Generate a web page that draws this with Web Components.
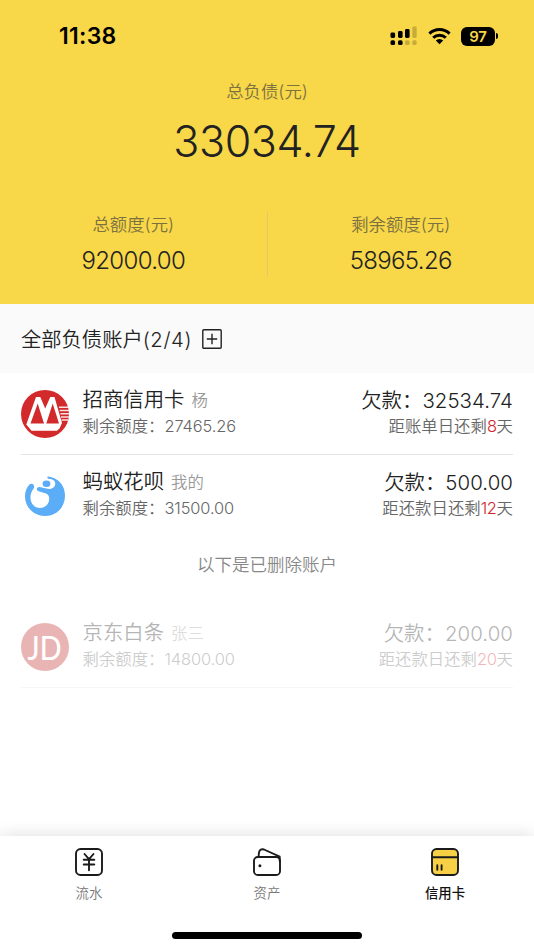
<!DOCTYPE html>
<html lang="zh-CN">
<head>
<meta charset="utf-8">
<title>信用卡</title>
<style>
html,body{margin:0;padding:0}
body{width:534px;height:950px;overflow:hidden;background:#fff;font-family:Inter,"Noto Sans CJK SC",sans-serif;font-weight:350;color:#222}
</style>
</head>
<body>
<credit-app></credit-app>
<script>
function define(name, html) {
  const t = document.createElement('template');
  t.innerHTML = html;
  customElements.define(name, class extends HTMLElement {
    constructor() {
      super();
      this.attachShadow({mode: 'open'}).appendChild(t.content.cloneNode(true));
    }
  });
}

define('status-bar', `
<style>
:host{display:flex;height:71px;box-sizing:border-box;padding:1px 36px 0 59px;align-items:center;justify-content:space-between;color:#000}
.time{font-size:23px;font-weight:600;line-height:28px;letter-spacing:.3px}
.right{display:flex;align-items:center}
svg{display:block}
.sig{margin-right:10px}.wifi{margin-right:10px}
.bat{width:34px;height:19px;border-radius:6px;background:#000;color:#f7d748;font-size:15px;font-weight:600;line-height:19px;text-align:center;letter-spacing:-.3px}
.cap{width:2px;height:6px;margin-left:1px;border-radius:0 3px 3px 0;background:#000}
</style>
<span class="time">11:38</span>
<div class="right">
<svg class="sig" width="28" height="20" viewBox="0 0 28 20"><rect x=".5" y="6.500" width="4.600" height="5.500" rx="1.400"/><rect x="8" y="5" width="4.600" height="7" rx="1.400"/><rect x="15" y="3" width="4.600" height="9" rx="1.400"/><rect x="22.300" y=".5" width="4.400" height="11.500" rx="1.400" opacity=".2"/><rect x=".5" y="14.300" width="4.600" height="4.700" rx="1.600"/><rect x="8" y="14.300" width="4.600" height="4.700" rx="1.600"/><rect x="15" y="14.300" width="4.600" height="4.700" rx="1.600" opacity=".2"/><rect x="22.300" y="14.300" width="4.400" height="4.700" rx="1.600" opacity=".2"/></svg>
<svg class="wifi" width="23" height="18" viewBox="0 0 23 18" fill="none" stroke="#000" stroke-width="3"><path d="M1.400 6.600a14.500 14.500 0 0 1 20.200 0"/><path d="M5.200 10.700a9 9 0 0 1 12.600 0"/><path d="M11.500 17.300 7.800 13.600a5.300 5.300 0 0 1 7.400 0Z" fill="#000" stroke="none"/></svg>
<span class="bat">97</span><i class="cap"></i>
</div>`);

define('amount-stat', `
<style>
:host{display:flex;flex-direction:column;align-items:center;flex:1}
.l{font-size:17.400px;line-height:24px;color:#7c7141;white-space:nowrap}
.v{font-size:24px;line-height:30px;margin-top:9px;letter-spacing:-.65px;white-space:nowrap}
:host([large]) .v{font-size:43px;font-weight:300;line-height:52px;margin-top:11px;letter-spacing:-.4px}
</style>
<span class="l"><slot name="label"></slot></span><span class="v"><slot></slot></span>`);

define('debt-summary', `
<style>
:host{display:flex;flex-direction:column;height:304px;background:#f8d748}
.total{display:flex;margin-top:9px}
.pair{display:flex;margin-top:45px;height:65px}
.pair amount-stat{padding-top:1px}
hr{width:1px;height:65px;border:0;margin:0;background:#dfc96a}
</style>
<status-bar></status-bar>
<div class="total"><amount-stat large><span slot="label">总负债(元)</span>33034.74</amount-stat></div>
<div class="pair"><amount-stat><span slot="label">总额度(元)</span>92000.00</amount-stat><hr><amount-stat><span slot="label">剩余额度(元)</span>58965.26</amount-stat></div>`);

define('section-heading', `
<style>
:host{display:flex;align-items:center;gap:10px;height:69px;padding:0 21px;background:#fafafa;font-size:20.300px;white-space:nowrap}
span{padding-bottom:2px}
.count{letter-spacing:.6px}
svg{display:block}
</style>
<span><slot></slot><span class="count"><slot name="count"></slot></span></span>
<svg width="20" height="20" viewBox="0 0 20 20" fill="none" stroke="#222" stroke-width="1.400"><rect x=".8" y=".8" width="18.400" height="18.400" rx="1"/><path d="M10 4.800v10.400M4.800 10h10.400"/></svg>`);

define('account-row', `
<style>
:host{display:block;padding:0 21px}
.row{display:flex;height:82px;box-sizing:border-box;border-bottom:1px solid #e4e4e4;align-items:center}
:host([last]) .row{border-color:transparent}
:host([deleted]) .row{opacity:.33}
.icon{width:48px;height:48px;margin-right:13.500px}
.text{flex:1;min-width:0;padding-bottom:2px}
.line{display:flex;justify-content:space-between;white-space:nowrap}
.a{font-size:20.400px;line-height:27px;height:27px;align-items:center}
.b{font-size:16.400px;line-height:24px;height:24px;color:#666}
.own{font-size:16.400px;color:#999;margin-left:7px;position:relative;top:-1px}
.n{letter-spacing:.08px}
.m{letter-spacing:-.1px}
.day{color:#d2232a;letter-spacing:-.3px}
</style>
<div class="row"><div class="icon"><slot name="icon"></slot></div>
<div class="text"><div class="line a"><span><slot name="name"></slot><span class="own"><slot name="owner"></slot></span></span><span>欠款：<span class="n"><slot name="debt"></slot></span></span></div>
<div class="line b"><span>剩余额度：<span class="m"><slot name="left"></slot></span></span><span><slot name="due"></slot><span class="day"><slot name="days"></slot></span>天</span></div></div></div>`);

define('bank-logo', `
<style>:host,svg{display:block;width:48px;height:48px}</style>
<svg viewBox="0 0 48 48"><circle cx="24" cy="24" r="24" fill="#d2292a"/>
<path fill="#fff" d="M15 7h4.300L24.200 18.500 29.300 7h4.200L41 33l-2.500 5.500-2.500 2.200H10.500L5.300 34.500Z"/>
<path fill="#d2292a" d="M16.700 13.500 23 33.600H9.500ZM31.700 13.500 38 33.600H25.300Z"/>
<path d="M38 17.300h9.200M38.700 20.500h9.300M39.400 23.700h8.600M40 26.900h8M40.500 30.100h6.500" stroke="#fff" stroke-width="1.500" opacity=".85"/></svg>`);

define('pay-logo', `
<style>:host,svg{display:block;width:48px;height:48px}</style>
<svg viewBox="0 0 48 48"><path fill="#5aadf6" d="M27 4.600C37 5.500 44 13.200 44 23.500 44 35.500 35.500 44 24.200 44 13 44 4 35.500 4 24.500 4 19.500 5.800 15 8.500 12.500 11.300 10.500 14.300 13 12.800 16.200 11 19 9.500 21 9.500 25.500 9.500 31.500 13.500 36 18.800 36 25 36 28.600 31 28.200 26 28 23.500 26.500 21.800 23.500 21L17.500 19.200C14.800 18 15.600 14.600 18.500 14.900L26.500 16.800C31 17.400 34.500 15 34.200 11.200 34 8.500 31.500 7.300 28.500 7.100 26.500 7 25.500 4.800 27 4.600Z"/><ellipse cx="25.500" cy="11.700" rx="3.900" ry="3.200" fill="#5aadf6"/></svg>`);

define('jd-logo', `
<style>:host{display:flex;width:48px;height:48px;border-radius:50%;background:#bd1e1e;align-items:center;justify-content:center;color:#fff;font:500 33px/48px Lato,sans-serif}
span{transform:scaleX(.87)}</style>
<span>JD</span>`);

define('tab-item', `
<style>
:host{display:flex;flex:1;flex-direction:column;align-items:center;font-size:13.400px;line-height:20px;color:#777}
:host([active]){color:#111;font-weight:500}
.i{height:28px;margin:12px 0 7px}
</style>
<div class="i"><slot name="icon"></slot></div><span><slot></slot></span>`);

define('tab-bar', `
<style>
:host{display:flex;flex-direction:column;align-items:center;height:114px;background:#fff;box-shadow:0 0 16px rgba(0,0,0,.14)}
.tabs{display:flex;width:100%;height:96px}
svg{display:block;width:28px;height:28px;fill:none;stroke:#1b1b1b;stroke-width:1.900;stroke-linecap:round;stroke-linejoin:round}
.home{width:190px;height:7px;border-radius:4px;background:#000}
</style>
<div class="tabs">
<tab-item><svg slot="icon" viewBox="0 0 28 28"><rect x="1" y="1" width="26" height="26" rx="4.500"/><path d="M9.500 6 14 11.200 18.500 6M8.700 11.700h10.600M8.700 16.500h10.600M14 11.200v11"/></svg>流水</tab-item>
<tab-item><svg slot="icon" viewBox="0 0 28 28"><rect x="1" y="9" width="26" height="18" rx="3.800"/><path d="M5.500 9 6 4.500C6.500 1.800 8.500.6 11 1.500L26.700 8.700V13"/><circle cx="6.900" cy="17.700" r="1.500" fill="#1b1b1b" stroke="none"/></svg>资产</tab-item>
<tab-item active><svg slot="icon" viewBox="0 0 28 28"><rect x="1" y="1" width="26" height="26" rx="4.500" fill="#f7d046"/><path d="M1 9.200h26M6.300 17.300v4.500M10.600 17.300v4.500"/></svg>信用卡</tab-item>
</div>
<div class="home"></div>`);

define('credit-app', `
<style>
:host{display:flex;flex-direction:column;width:534px;height:950px}
main{flex:1}
.note{height:69px;box-sizing:border-box;padding-top:16px;line-height:24px;font-size:17.500px;text-align:center;color:#888}
</style>
<debt-summary></debt-summary>
<section-heading>全部负债账户<span slot="count">(2/4)</span></section-heading>
<main>
<account-row><bank-logo slot="icon"></bank-logo><span slot="name">招商信用卡</span><span slot="owner">杨</span><span slot="debt">32534.74</span><span slot="left">27465.26</span><span slot="due">距账单日还剩</span><span slot="days">8</span></account-row>
<account-row last><pay-logo slot="icon"></pay-logo><span slot="name">蚂蚁花呗</span><span slot="owner">我的</span><span slot="debt">500.00</span><span slot="left">31500.00</span><span slot="due">距还款日还剩</span><span slot="days">12</span></account-row>
<div class="note">以下是已删除账户</div>
<account-row deleted><jd-logo slot="icon"></jd-logo><span slot="name">京东白条</span><span slot="owner">张三</span><span slot="debt">200.00</span><span slot="left">14800.00</span><span slot="due">距还款日还剩</span><span slot="days">20</span></account-row>
</main>
<tab-bar></tab-bar>`);
</script>
</body>
</html>
